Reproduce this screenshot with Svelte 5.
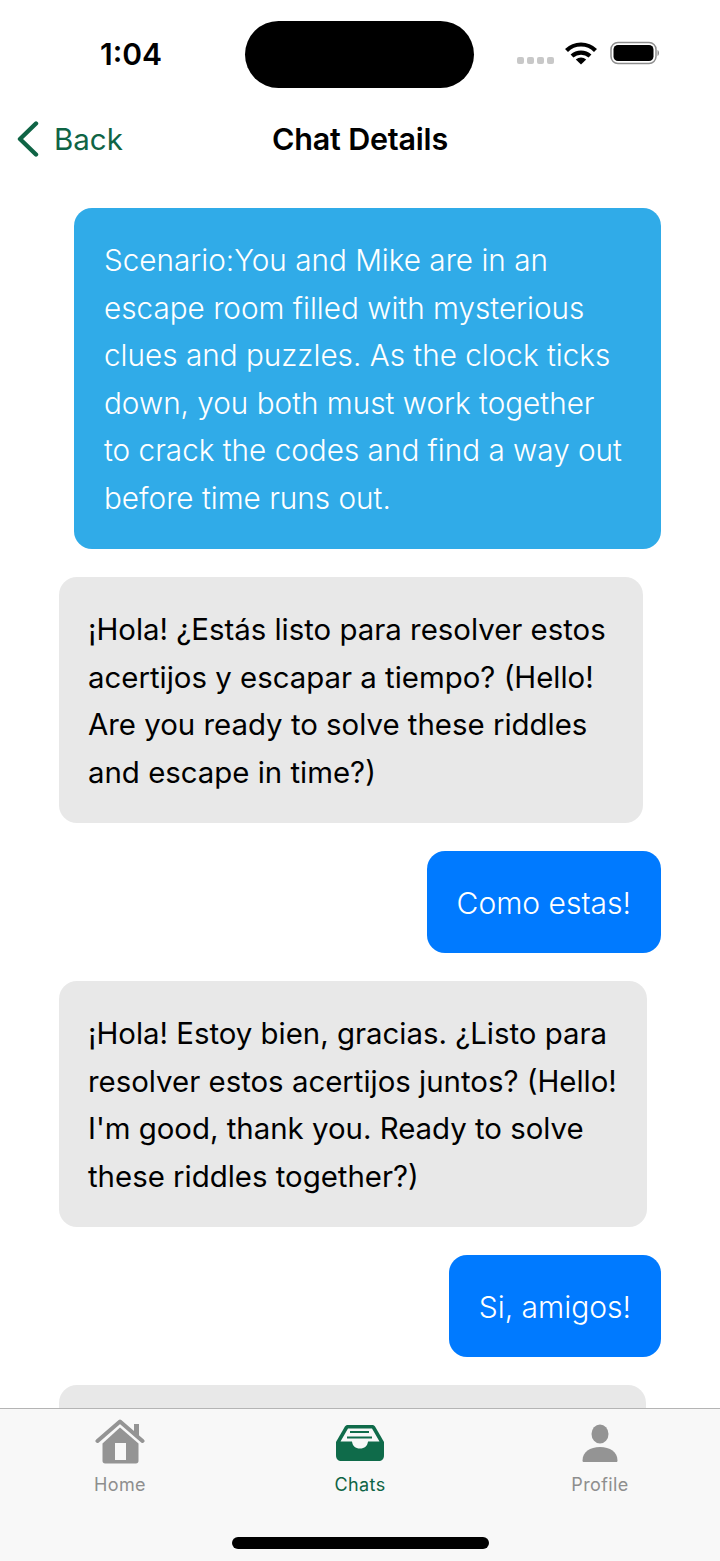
<script>
  const messages = [
    { kind: 'scenario', lines: ['Scenario:You and Mike are in an', 'escape room filled with mysterious', 'clues and puzzles. As the clock ticks', 'down, you both must work together', 'to crack the codes and find a way out', 'before time runs out.'] },
    { kind: 'bot first', lines: ['¡Hola! ¿Estás listo para resolver estos', 'acertijos y escapar a tiempo? (Hello!', 'Are you ready to solve these riddles', 'and escape in time?)'] },
    { kind: 'me', lines: ['Como estas!'] },
    { kind: 'bot', lines: ['¡Hola! Estoy bien, gracias. ¿Listo para', 'resolver estos acertijos juntos? (Hello!', "I'm good, thank you. Ready to solve", 'these riddles together?)'] },
    { kind: 'me', lines: ['Si, amigos!'] },
    // next reply is cut off by the tab bar, its text is below the fold
    { kind: 'bot cut', lines: [] }
  ];
</script>

<div class="screen">
  <div class="status">
    <span class="time">1:04</span>
    <div class="island"></div>
    <div class="indicators">
      <div class="dots"><i></i><i></i><i></i><i></i></div>
      <svg class="wifi" viewBox="0 0 32 24" width="32" height="24">
        <path d="M1.5 9.5C9.500 1.500 22.500 1.500 30.500 9.500" fill="none" stroke="#000" stroke-width="4.200" />
        <path d="M7 15C12 10.500 20 10.500 25 15" fill="none" stroke="#000" stroke-width="4.200" />
        <path d="M16 23.500L10.800 18.500C13.800 15.800 18.200 15.800 21.200 18.500Z" fill="#000" />
      </svg>
      <svg class="battery" viewBox="0 0 50 24" width="50" height="24">
        <rect x="1" y="1.500" width="45" height="21" rx="7" fill="none" stroke="#8e8e8e" stroke-width="1.500" />
        <rect x="3.500" y="4" width="40" height="16" rx="4.500" fill="#000" />
        <path d="M47.500 9C49.500 10 49.500 14 47.500 15Z" fill="#8e8e8e" />
      </svg>
    </div>
  </div>

  <header class="nav">
    <div class="back">
      <svg viewBox="0 0 24 36" width="24" height="36">
        <path d="M20 2.500L4 18L20 33.500" fill="none" stroke="#0f6445" stroke-width="4.400" stroke-linecap="round" stroke-linejoin="round" />
      </svg>
      <span>Back</span>
    </div>
    <h1>Chat Details</h1>
  </header>

  <main class="chat">
    {#each messages as msg}
      <div class="bubble {msg.kind}">
        {#each msg.lines as line}
          <span class="line">{line}</span>
        {/each}
      </div>
    {/each}
  </main>

  <nav class="tabs">
    <div class="tab">
      <svg viewBox="0 0 50 46" width="50" height="46">
        <rect x="39" y="6" width="5" height="12" fill="#949494" />
        <path d="M2.500 23L25 3.500L47.500 23" fill="none" stroke="#949494" stroke-width="4" stroke-linecap="round" stroke-linejoin="round" />
        <path d="M25 9.500L43.500 25.500V43C43.500 44.500 42.500 45.500 41 45.500H10C8.500 45.500 7.500 44.500 7.500 43V25.500Z" fill="#949494" />
        <rect x="20" y="25" width="11" height="17" fill="#f8f8f8" />
      </svg>
      <span>Home</span>
    </div>
    <div class="tab active">
      <svg viewBox="0 0 50 46" width="50" height="46">
        <path d="M13 7H37C38.500 7 39.500 7.600 40.200 8.800L49 24V37C49 41 47 43 43.500 43H6.500C3 43 1 41 1 37V24L9.800 8.800C10.500 7.600 11.500 7 13 7Z" fill="#0f6b4a" />
        <path d="M13 10.500H37L44.500 23.500H33C32.500 28 29.500 30.500 25 30.500C20.500 30.500 17.500 28 17 23.500H5.500Z" fill="#f8f8f8" />
        <rect x="15" y="13" width="19" height="2" fill="#0f6b4a" />
        <rect x="12" y="18.500" width="25" height="2" fill="#0f6b4a" />
      </svg>
      <span>Chats</span>
    </div>
    <div class="tab">
      <svg viewBox="0 0 50 46" width="50" height="46">
        <ellipse cx="25" cy="16" rx="8.500" ry="9.500" fill="#949494" />
        <path d="M7.500 42.500C7.500 34 15 29 25 29C35 29 42.500 34 42.500 42.500C42.500 43.500 42 44 41 44H9C8 44 7.500 43.500 7.500 42.500Z" fill="#949494" />
      </svg>
      <span>Profile</span>
    </div>
    <div class="home-bar"></div>
  </nav>
</div>

<style>
  :global(body) {
    margin: 0;
    background: #fff;
  }

  .screen {
    width: 720px;
    height: 1561px;
    display: flex;
    flex-direction: column;
    overflow: hidden;
    font-family: Inter, "Liberation Sans", sans-serif;
    color: #000;
  }

  .status {
    height: 108px;
    flex: none;
    display: grid;
    grid-template-columns: 245px 229px 1fr;
    box-sizing: border-box;
    padding-top: 21px;
  }
  .time {
    font-size: 30px;
    font-weight: 600;
    text-align: center;
    line-height: 66px;
    padding-left: 17px;
  }
  .island {
    height: 67px;
    background: #000;
    border-radius: 33.500px;
  }
  .indicators {
    display: flex;
    align-items: flex-start;
    padding: 20px 0 0 43px;
  }
  .dots {
    display: flex;
    gap: 3px;
    margin: 16px 11px 0 0;
  }
  .dots i {
    width: 7px;
    height: 7px;
    border-radius: 2px;
    background: #c8c8c8;
  }
  .wifi {
    margin-right: 13px;
  }

  .nav {
    height: 62px;
    flex: none;
    position: relative;
    display: flex;
    align-items: center;
    justify-content: center;
    margin-bottom: 38px;
  }
  .nav h1 {
    margin: 0 0 2px;
    font-size: 30.500px;
    font-weight: 600;
    letter-spacing: -0.2px;
  }
  .back {
    position: absolute;
    left: 16px;
    top: 13px;
    display: flex;
    align-items: center;
    gap: 14px;
    color: #0f6445;
    font-size: 29.500px;
  }

  .chat {
    flex: 1;
    min-height: 0;
    display: flex;
    flex-direction: column;
    gap: 28px;
    padding: 0 59px;
    overflow: hidden;
  }
  .bubble {
    flex: none;
    box-sizing: border-box;
    padding: 29px 29px 27px;
    border-radius: 18px;
    font-size: 29.400px;
    line-height: 47.500px;
  }
  .line {
    display: block;
    white-space: nowrap;
  }
  .scenario {
    margin-left: 15px;
    padding-left: 30px;
    background: #30abe8;
    color: #fff;
    font-weight: 300;
    font-size: 29.700px;
  }
  .bot {
    background: #e8e8e8;
    margin-right: 14px;
  }
  .first {
    margin-right: 18px;
  }
  .cut {
    height: 150px;
    margin-right: 15px;
  }
  .me {
    align-self: flex-end;
    padding-inline: 30px;
    background: #007aff;
    color: #fff;
    font-weight: 300;
    font-size: 30px;
    line-height: 46px;
  }

  .tabs {
    height: 153px;
    flex: none;
    position: relative;
    box-sizing: border-box;
    display: grid;
    grid-template-columns: repeat(3, 1fr);
    align-items: start;
    padding-top: 9px;
    background: #f8f8f8;
    border-top: 1px solid #b4b4b4;
  }
  .tab {
    display: flex;
    flex-direction: column;
    align-items: center;
    gap: 10px;
    font-size: 18px;
    font-weight: 400;
    letter-spacing: 0.4px;
    color: #8e8e8e;
  }
  .active {
    color: #0f6445;
  }
  .home-bar {
    position: absolute;
    left: 232px;
    bottom: 12px;
    width: 257px;
    height: 12px;
    border-radius: 6px;
    background: #000;
  }
</style>
